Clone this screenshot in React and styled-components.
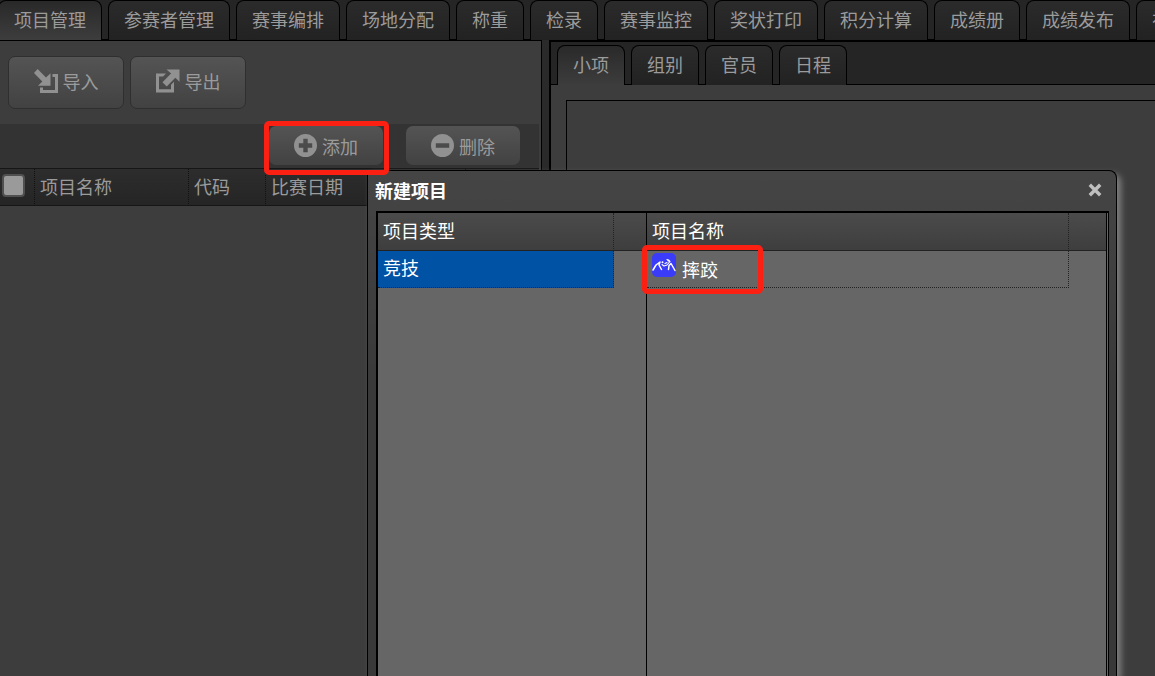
import React from 'react'
import styled, { createGlobalStyle, css } from 'styled-components'

const colors = {
  panel: '#3d3d3d',
  strip: '#252525',
  grid: '#666666',
  line: '#000000',
  text: '#9b9b9b',
  icon: '#919191',
  selected: '#0053a4',
  highlight: '#fb2012',
}

const GlobalStyle = createGlobalStyle`
  *,
  *::after {
    box-sizing: border-box;
  }

  body {
    margin: 0;
    background: ${colors.panel};
  }

  body, button, input, table {
    font-family: 'Noto Sans CJK SC', sans-serif;
    font-size: 18px;
    line-height: 24px;
  }
`

const Page = styled.div`
  position: relative;
  display: flex;
  flex-direction: column;
  height: 100vh;
  overflow: hidden;
  color: ${colors.text};
`

const TabStrip = styled.nav`
  display: flex;
  flex: none;
  gap: 6px;
  height: 40px;
  overflow: hidden;
  background: linear-gradient(${colors.line}, ${colors.line}) bottom / 100% 1px
    no-repeat ${colors.strip};
`

const MainTabs = styled(TabStrip)`
  margin-left: -2px;
`

const SubTabs = styled(TabStrip)`
  height: 43px;
  padding: 3px 6px 0;
`

const Tab = styled.button`
  flex: none;
  height: 40px;
  padding: 0 15px 3px;
  border: 1px solid ${colors.line};
  border-bottom: 0;
  border-radius: 8px 8px 0 0;
  background: linear-gradient(#2b2b2b, #222222);
  color: ${colors.text};
  white-space: nowrap;

  ${({ $active }) =>
    $active &&
    css`
      background: linear-gradient(#292929, ${colors.panel});
    `}
`

const Workspace = styled.div`
  display: flex;
  flex: 1;
  min-height: 0;
  background: #2a2a2a;
`

const ProjectPanel = styled.section`
  flex: none;
  width: 542px;
  padding-right: 2px;
  border: 1px solid ${colors.line};
  border-width: 1px 1px 0 0;
  background: ${colors.panel};
`

const DetailPanel = styled.section`
  display: flex;
  flex: 1;
  flex-direction: column;
  min-width: 0;
  margin-left: 7px;
  border: 2px solid ${colors.line};
  border-width: 2px 0 0 2px;
  background: ${colors.panel};
`

const DetailBox = styled.div`
  flex: 1;
  margin: 15px 0 0 15px;
  border: 1px solid ${colors.line};
  border-width: 1px 0 0 1px;
`

const FileActions = styled.div`
  display: flex;
  gap: 6px;
  padding: 15px 8px;
`

const EditActions = styled.div`
  display: flex;
  align-items: flex-start;
  justify-content: flex-end;
  gap: 23px;
  height: 44px;
  padding: 2px 19px 0 0;
  background: #333333;
`

const Button = styled.button`
  display: flex;
  align-items: center;
  justify-content: center;
  gap: 5px;
  width: 116px;
  height: 53px;
  padding: 0 0 4px;
  border: 1px solid #2f2f2f;
  border-radius: 7px;
  background: linear-gradient(#545454, #424242);
  color: ${colors.text};

  svg {
    flex: none;
    fill: ${colors.icon};
  }
`

const SmallButton = styled(Button)`
  width: 114px;
  height: 39px;
  padding: 0;
  border: 0;
`

const Highlighted = styled.div`
  position: relative;

  &::after {
    content: '';
    position: absolute;
    z-index: 3;
    inset: -5px -6px -10px -5px;
    border: 5px solid ${colors.highlight};
    border-radius: 5px;
    pointer-events: none;
  }
`

const Table = styled.table`
  width: 100%;
  table-layout: fixed;
  border-spacing: 0;
  text-align: left;

  th,
  td {
    height: 37px;
    padding: 0 5px 3px;
    font-weight: normal;
    white-space: nowrap;
  }
`

const ProjectTable = styled(Table)`
  border-top: 1px solid #161616;

  th {
    border-right: 1px dotted #111111;
    border-bottom: 1px solid #161616;
    background: linear-gradient(#2d2d2d, #252525);
  }

  th:first-child {
    padding: 0 2px 3px;
  }

  th:last-child {
    border-right: 0;
  }
`

const Checkbox = styled.input`
  display: block;
  appearance: none;
  width: 23px;
  height: 23px;
  margin: 0;
  border: 2px solid #505050;
  border-radius: 4px;
  background: #9a9a9a;
`

const Dialog = styled.section`
  position: absolute;
  z-index: 2;
  top: 170px;
  right: 38px;
  bottom: 0;
  left: 367px;
  display: flex;
  flex-direction: column;
  padding: 0 7px 0 8px;
  border: 1px solid ${colors.line};
  border-bottom: 0;
  border-radius: 0 8px 0 0;
  background: linear-gradient(#454545, #393939 220px);
  box-shadow: 4px 4px 6px #808080;
  color: #ffffff;
`

const DialogHeader = styled.header`
  display: flex;
  align-items: center;
  justify-content: space-between;
  height: 40px;
  margin-left: -1px;
  padding: 0 7px 2px 0;
`

const DialogTitle = styled.h2`
  margin: 0;
  font-size: 18px;
  font-weight: bold;
`

const CloseButton = styled.button`
  display: flex;
  padding: 0;
  border: 0;
  background: none;
`

const DialogBody = styled.div`
  display: flex;
  flex: 1;
  padding-right: 1px;
  border: 2px solid ${colors.line};
  border-width: 2px 1px 0 2px;
  background: ${colors.grid};
`

const Pane = styled.div`
  flex: 1;
  border-right: 1px solid ${colors.line};
`

const TypePane = styled(Pane)`
  flex: none;
  width: 269px;
`

const PickTable = styled(Table)`
  th {
    height: 38px;
    border-bottom: 1px solid #222222;
    background: linear-gradient(#4b4b4b, #3e3e3e);
  }

  td {
    padding-bottom: 4px;
  }

  th:first-child {
    border-right: 1px dotted #222222;
  }

  td:first-child {
    border-right: 1px dotted #222222;
    border-bottom: 1px dotted #222222;
    background: ${({ $selected }) => ($selected ? colors.selected : 'none')};
  }
`

const SportCell = styled.div`
  position: relative;
  display: flex;
  align-items: flex-end;
  gap: 6px;
  height: 28px;

  svg {
    align-self: flex-start;
  }

  &::after {
    content: '';
    position: absolute;
    top: -8px;
    left: -10px;
    width: 121px;
    height: 49px;
    border: 5px solid ${colors.highlight};
    border-radius: 5px;
  }
`

const ImportIcon = () => (
  <svg width='24' height='24' viewBox='0 0 24 24' aria-hidden='true'>
    <path d='M3.6 0 12 8.4l4.5-4.2v12.6H4l4.3-4.4L0 4z' />
    <path d='M18.5 5H24v19H6v-5.5h3V21h12V8h-2.5z' />
  </svg>
)

const ExportIcon = () => (
  <svg width='24' height='24' viewBox='0 0 24 24' aria-hidden='true'>
    <path d='M10.5.5H23.5v12.3l-4.2-4.1-8.6 8.8-4.2-4.2 8.6-8.7z' />
    <path d='M0 4.5h10l-3 3H3v12.8h12v-4.6l3-3v10.8H0z' />
  </svg>
)

const PlusIcon = () => (
  <svg width='23' height='23' viewBox='0 0 23 23' aria-hidden='true'>
    <path
      fillRule='evenodd'
      d='M11.5 0a11.5 11.5 0 1 1 0 23a11.5 11.5 0 1 1 0-23zM9.3 4.8v4.5H4.8v4.4h4.5v4.5h4.4v-4.5h4.5V9.3h-4.5V4.8z'
    />
  </svg>
)

const MinusIcon = () => (
  <svg width='23' height='23' viewBox='0 0 23 23' aria-hidden='true'>
    <path
      fillRule='evenodd'
      d='M11.5 0a11.5 11.5 0 1 1 0 23a11.5 11.5 0 1 1 0-23zM4.8 9.3v4.4h13.4V9.3z'
    />
  </svg>
)

const CloseIcon = () => (
  <svg width='14' height='14' viewBox='0 0 14 14' aria-hidden='true'>
    <path
      d='M3 3l8 8M11 3l-8 8'
      stroke='#c0c0c0'
      strokeWidth='3.4'
      strokeLinecap='square'
    />
  </svg>
)

const WrestlingIcon = () => (
  <svg width='24' height='24' viewBox='0 0 24 24' aria-hidden='true'>
    <rect width='24' height='24' rx='5' fill='#3a3cfa' />
    <g fill='none' stroke='#ffffff' strokeLinecap='round' strokeLinejoin='round'>
      <path strokeWidth='1.5' d='M1 17l3-5 4-3-1 3 2.500 4.500' />
      <path strokeWidth='1.5' d='M23 17.500l-4-7-2 2-.5 4' />
      <path strokeWidth='1.1' d='M10 11.500l2 1.500 3-1 3-3.500-3-2M13 10.500l2-1' />
    </g>
    <circle cx='10.500' cy='9.300' r='1' fill='#ffffff' />
    <circle cx='16.500' cy='7.500' r='1.100' fill='#ffffff' />
  </svg>
)

const mainTabs = [
  '项目管理',
  '参赛者管理',
  '赛事编排',
  '场地分配',
  '称重',
  '检录',
  '赛事监控',
  '奖状打印',
  '积分计算',
  '成绩册',
  '成绩发布',
  '视频',
]

const subTabs = ['小项', '组别', '官员', '日程']

const renderTabs = (tabs) =>
  tabs.map((label, i) => (
    <Tab key={label} type='button' $active={i === 0}>
      {label}
    </Tab>
  ))

const NewProjectDialog = () => (
  <Dialog role='dialog' aria-labelledby='dialog-title'>
    <DialogHeader>
      <DialogTitle id='dialog-title'>新建项目</DialogTitle>
      <CloseButton type='button' aria-label='关闭'>
        <CloseIcon />
      </CloseButton>
    </DialogHeader>
    <DialogBody>
      <TypePane>
        <PickTable $selected>
          <colgroup>
            <col width='236' />
            <col />
          </colgroup>
          <thead>
            <tr>
              <th>项目类型</th>
              <th />
            </tr>
          </thead>
          <tbody>
            <tr>
              <td>竞技</td>
              <td />
            </tr>
          </tbody>
        </PickTable>
      </TypePane>
      <Pane>
        <PickTable>
          <colgroup>
            <col />
            <col width='37' />
          </colgroup>
          <thead>
            <tr>
              <th>项目名称</th>
              <th />
            </tr>
          </thead>
          <tbody>
            <tr>
              <td>
                <SportCell>
                  <WrestlingIcon />
                  摔跤
                </SportCell>
              </td>
              <td />
            </tr>
          </tbody>
        </PickTable>
      </Pane>
    </DialogBody>
  </Dialog>
)

export default function App() {
  return (
    <Page>
      <GlobalStyle />
      <MainTabs>{renderTabs(mainTabs)}</MainTabs>
      <Workspace>
        <ProjectPanel>
          <FileActions>
            <Button type='button'>
              <ImportIcon />
              导入
            </Button>
            <Button type='button'>
              <ExportIcon />
              导出
            </Button>
          </FileActions>
          <EditActions>
            <Highlighted>
              <SmallButton type='button'>
                <PlusIcon />
                添加
              </SmallButton>
            </Highlighted>
            <SmallButton type='button'>
              <MinusIcon />
              删除
            </SmallButton>
          </EditActions>
          <ProjectTable>
            <colgroup>
              <col width='35' />
              <col width='154' />
              <col width='77' />
              <col width='200' />
              <col />
            </colgroup>
            <thead>
              <tr>
                <th>
                  <Checkbox type='checkbox' aria-label='全选' />
                </th>
                <th>项目名称</th>
                <th>代码</th>
                <th>比赛日期</th>
                <th />
              </tr>
            </thead>
          </ProjectTable>
        </ProjectPanel>
        <DetailPanel>
          <SubTabs>{renderTabs(subTabs)}</SubTabs>
          <DetailBox />
        </DetailPanel>
      </Workspace>
      <NewProjectDialog />
    </Page>
  )
}
